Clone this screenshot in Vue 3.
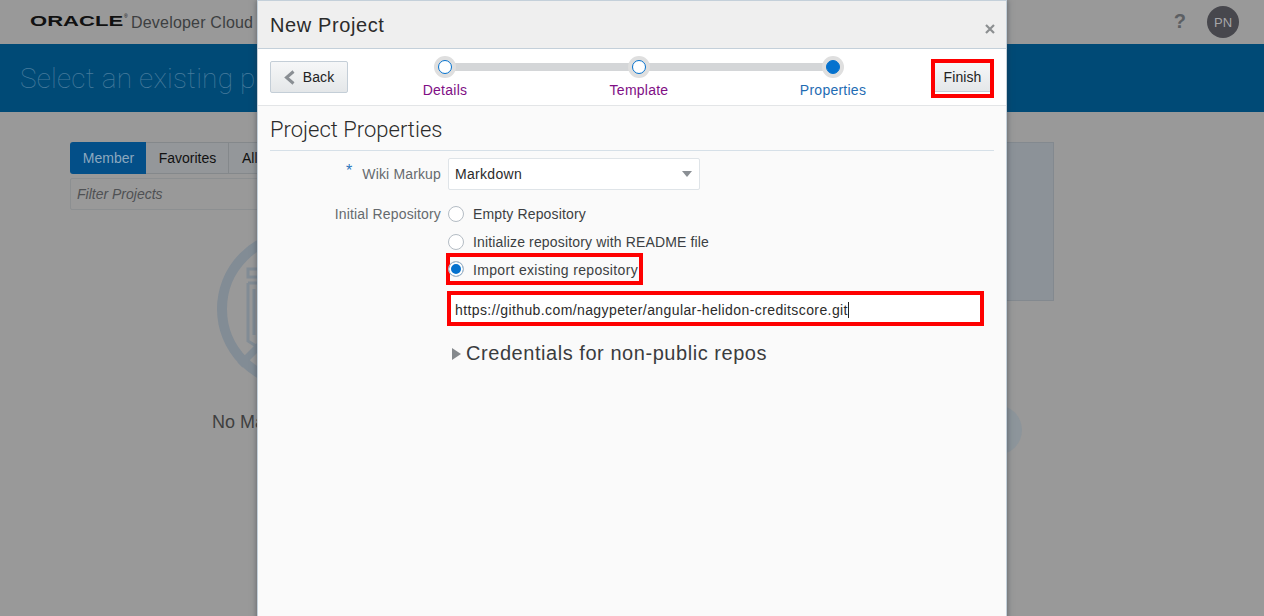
<script setup>
const steps = [
  { label: 'Details', done: true },
  { label: 'Template', done: true },
  { label: 'Properties', done: false }
]
const repoOptions = ['Empty Repository', 'Initialize repository with README file']
</script>

<template>
  <div class="page">
    <!-- dimmed page behind the dialog -->
    <header class="topbar">
      <div class="brand">
        <span class="oracle">ORACLE</span>
        <span class="reg">®</span>
        <span class="product">Developer Cloud</span>
      </div>
      <div class="top-right">
        <span class="help">?</span>
        <span class="avatar">PN</span>
      </div>
    </header>
    <div class="banner">Select an existing p</div>
    <main class="content">
      <div class="left-col">
        <div class="tabs">
          <span class="tab active">Member</span>
          <span class="tab fav">Favorites</span>
          <span class="tab all">All</span>
        </div>
        <div class="filter">Filter Projects</div>
        <svg class="empty-icon" width="158" height="158" viewBox="0 0 158 158">
          <circle cx="79" cy="79" r="74" fill="none" stroke="#828c95" stroke-width="10" />
          <rect x="31" y="39" width="14" height="8" fill="none" stroke="#828c95" stroke-width="3" />
          <path d="M31 53h20M31 53v58l8 5M37 59v46" fill="none" stroke="#828c95" stroke-width="3" />
          <path d="M23 135L135 23" stroke="#828c95" stroke-width="7" />
        </svg>
        <div class="empty-text">No Ma</div>
      </div>
      <div class="right-col">
        <div class="info-panel"></div>
        <div class="round"></div>
      </div>
    </main>

    <!-- dialog -->
    <section class="dialog">
      <div class="dialog-head">
        <h2>New Project</h2>
        <svg class="close" width="10" height="10" viewBox="0 0 10 10">
          <path d="M1 1l8 8M9 1l-8 8" stroke="#8c8f91" stroke-width="2.2" />
        </svg>
      </div>

      <div class="toolbar">
        <button class="btn back">
          <svg width="11" height="15" viewBox="0 0 11 15">
            <path d="M9.5 1.5L2.5 7.5l7 6" fill="none" stroke="#8a8f94" stroke-width="3" />
          </svg>
          Back
        </button>
        <div class="train">
          <div class="train-line"></div>
          <div v-for="s in steps" :key="s.label" class="step">
            <span class="node" :class="{ current: !s.done }"><i></i></span>
            <span class="step-label" :class="{ current: !s.done }">{{ s.label }}</span>
          </div>
        </div>
        <div class="mark finish-mark">
          <button class="btn finish">Finish</button>
        </div>
      </div>

      <div class="dialog-body">
        <h3>Project Properties</h3>
        <div class="form">
          <label class="lbl wiki"><span class="req">*</span>Wiki Markup</label>
          <div class="select">
            <span>Markdown</span>
            <i class="caret"></i>
          </div>

          <label class="lbl repo">Initial Repository</label>
          <div class="options">
            <div v-for="o in repoOptions" :key="o" class="radio-row">
              <span class="radio"></span>
              <span>{{ o }}</span>
            </div>
            <div class="mark radio-mark">
              <span class="radio on"></span>
              <span>Import existing repository</span>
            </div>
            <div class="mark url-mark">
              <span class="url">https://github.com/nagypeter/angular-helidon-creditscore.git</span><span class="cursor"></span>
            </div>
            <div class="credentials">
              <i class="tri"></i>
              <span>Credentials for non-public repos</span>
            </div>
          </div>
        </div>
      </div>
    </section>
  </div>
</template>

<style>
html, body {
  margin: 0;
  overflow: hidden;
}
</style>

<style scoped>
.page {
  position: relative;
  width: 1264px;
  height: 616px;
  overflow: hidden;
  background: #999999;
  font-family: "Liberation Sans", Arial, sans-serif;
  color: #2c2c2c;
}

.topbar {
  height: 44px;
  display: flex;
  justify-content: space-between;
  align-items: center;
  padding: 0 25px 0 30px;
  box-sizing: border-box;
}
.brand {
  display: flex;
  align-items: center;
  height: 44px;
}
.oracle {
  display: inline-block;
  width: 94px;
  font-size: 15px;
  font-weight: 700;
  color: #111;
  transform: scaleX(1.47);
  transform-origin: left center;
  line-height: 1;
  margin-top: -3px;
}
.reg {
  font-size: 5px;
  color: #111;
  margin: -12px 0 0 0;
  width: 7px;
}
.product {
  font-size: 16px;
  letter-spacing: 0.2px;
  color: #3d3f41;
  margin-top: 2px;
  white-space: nowrap;
}
.top-right {
  display: flex;
  align-items: center;
  gap: 21px;
}
.help {
  font-size: 20px;
  font-weight: 700;
  color: #5c5f63;
  margin-top: -2px;
}
.avatar {
  width: 32px;
  height: 32px;
  border-radius: 50%;
  background: #47474d;
  color: #a6a6a8;
  font-size: 13px;
  display: flex;
  align-items: center;
  justify-content: center;
}

.banner {
  height: 68px;
  background: #004a76;
  color: #467a9c;
  font-family: Roboto, "Liberation Sans", sans-serif;
  font-weight: 100;
  font-size: 28px;
  line-height: 70px;
  padding-left: 20px;
  letter-spacing: 0.2px;
}

.content {
  display: flex;
  padding: 30px 0 0 70px;
}
.left-col {
  width: 300px;
  display: flex;
  flex-direction: column;
}
.tabs {
  display: flex;
  height: 32px;
  font-size: 14px;
}
.tab {
  display: flex;
  align-items: center;
  justify-content: center;
  box-sizing: border-box;
  background: #94979a;
  border: 1px solid #84888b;
  border-left: 0;
  color: #111;
}
.tab.active {
  width: 76px;
  background: #034f88;
  border: 0;
  border-radius: 3px 0 0 3px;
  color: #8ca8bf;
  padding-left: 1px;
}
.tab.fav {
  width: 83px;
  padding-left: 1px;
}
.tab.all {
  width: 40px;
  padding-left: 13px;
  justify-content: flex-start;
}
.filter {
  margin-top: 4px;
  height: 32px;
  box-sizing: border-box;
  border: 1px solid #8c8f91;
  border-radius: 2px;
  padding-left: 6px;
  line-height: 30px;
  font-size: 14px;
  font-style: italic;
  color: #4f5154;
}
.empty-icon {
  margin: 20px 0 0 147px;
}
.empty-text {
  margin: 24px 0 0 142px;
  font-size: 18px;
  color: #3f3f3f;
}
.right-col {
  margin-left: 580px;
  width: 104px;
  display: flex;
  flex-direction: column;
  align-items: flex-end;
}
.info-panel {
  width: 104px;
  height: 159px;
  box-sizing: border-box;
  background: #8c9298;
  border: 1px solid #83898f;
}
.round {
  margin: 104px 32px 0 0;
  width: 50px;
  height: 50px;
  border-radius: 50%;
  background: #8d959b;
  flex: none;
}

.dialog {
  position: absolute;
  left: 257px;
  top: 0;
  width: 750px;
  height: 640px;
  box-sizing: border-box;
  background: #fafafa;
  border: 1px solid #c4d0da;
  border-bottom: 0;
  box-shadow: 0 0 6px rgba(40, 50, 60, 0.55);
}
.dialog-head {
  height: 47px;
  background: #efefef;
  border-bottom: 1px solid #c4d0da;
  display: flex;
  align-items: center;
  justify-content: space-between;
  padding: 0 11px 0 12px;
}
.dialog-head h2 {
  margin: 0;
  padding-top: 1px;
  font-size: 20px;
  font-weight: 400;
  letter-spacing: 0.6px;
  color: #2b2b2b;
}
.close {
  margin-top: 8px;
}

.toolbar {
  height: 56px;
  background: #fff;
  border-bottom: 1px solid #e3e5e7;
  display: flex;
  align-items: flex-start;
  padding: 0 12px;
  box-sizing: content-box;
}
.btn {
  font-family: inherit;
  font-size: 14px;
  letter-spacing: 0.1px;
  color: #222;
  background: linear-gradient(#f6f7f8, #e4e7e9);
  border: 1px solid #c4ced7;
  border-radius: 2px;
  padding: 0;
  box-sizing: border-box;
}
.back {
  width: 78px;
  height: 32px;
  margin-top: 12px;
  display: flex;
  align-items: center;
  justify-content: center;
  gap: 8px;
}
.train {
  position: relative;
  width: 582px;
  display: grid;
  grid-template-columns: repeat(3, 194px);
  padding-top: 7px;
}
.train-line {
  position: absolute;
  left: 97px;
  right: 97px;
  top: 14px;
  height: 8px;
  background: #d4d6d8;
}
.step {
  position: relative;
  display: flex;
  flex-direction: column;
  align-items: center;
}
.node {
  width: 22px;
  height: 22px;
  border-radius: 50%;
  background: #dfdfdf;
  display: flex;
  align-items: center;
  justify-content: center;
}
.node i {
  width: 12px;
  height: 12px;
  box-sizing: content-box;
  border: 1.5px solid #0572ce;
  border-radius: 50%;
  background: #fff;
}
.node.current i {
  background: #0572ce;
}
.step-label {
  margin-top: 4px;
  font-size: 14px;
  line-height: 16px;
  letter-spacing: 0.25px;
  color: #800e85;
}
.step-label.current {
  color: #1f6cb3;
}

.mark {
  border: 4px solid #fe0000;
  box-sizing: border-box;
}
.finish-mark {
  width: 63px;
  height: 39px;
  margin: 10px 0 0 1px;
  background: #fff;
  overflow: hidden;
}
.finish {
  display: block;
  width: 55px;
  height: 29px;
  border-width: 0 0 1px;
  border-radius: 0;
}

.dialog-body {
  padding: 10px 12px 0;
}
.dialog-body h3 {
  margin: 0;
  height: 35px;
  box-sizing: border-box;
  border-bottom: 1px solid #d6e0e8;
  font-family: Roboto, "Liberation Sans", sans-serif;
  font-size: 22px;
  font-weight: 300;
  line-height: 28px;
  color: #2b2b2b;
}
.form {
  display: grid;
  grid-template-columns: 171px 1fr;
  column-gap: 7px;
  margin-top: 7px;
  font-size: 14px;
  letter-spacing: 0.15px;
}
.lbl {
  text-align: right;
  color: #666a6e;
  letter-spacing: 0.15px;
  white-space: nowrap;
}
.wiki {
  padding-top: 7px;
}
.req {
  color: #2a76bd;
  font-size: 16px;
  margin-right: 10px;
  position: relative;
  top: -3px;
}
.repo {
  padding-top: 16px;
}
.select {
  width: 252px;
  height: 32px;
  box-sizing: border-box;
  border: 1px solid #dfe4e8;
  border-radius: 2px;
  background: #fff;
  display: flex;
  align-items: center;
  justify-content: space-between;
  padding: 0 7px 0 6px;
  color: #2b2b2b;
  letter-spacing: 0.3px;
}
.caret {
  width: 0;
  height: 0;
  border-left: 5px solid transparent;
  border-right: 5px solid transparent;
  border-top: 6px solid #8a8f94;
}
.options {
  padding-top: 10px;
  color: #3c3f42;
}
.radio-row {
  height: 28px;
  display: flex;
  align-items: center;
  gap: 9px;
}
.radio {
  width: 16px;
  height: 16px;
  flex: none;
  box-sizing: border-box;
  border: 1px solid #b4bcc4;
  border-radius: 50%;
  background: #fff;
  margin-top: -1px;
}
.radio.on {
  background: #0572ce;
  box-shadow: inset 0 0 0 2px #fff;
  margin: -3px 0 0 -4px;
}
.radio-mark {
  width: 197px;
  height: 32px;
  margin: -3px 0 0 -2px;
  padding: 2px 0 0 2px;
  display: flex;
  align-items: center;
  gap: 9px;
  letter-spacing: 0.33px;
  white-space: nowrap;
}
.url-mark {
  width: 537px;
  height: 35px;
  margin: 6px 0 0 -1px;
  padding: 3px 0 0 4px;
  background: #fff;
  display: flex;
  align-items: center;
  color: #2b2b2b;
  letter-spacing: 0.4px;
  white-space: nowrap;
}
.cursor {
  width: 1px;
  height: 16px;
  background: #222;
}
.credentials {
  margin-top: 16px;
  display: flex;
  align-items: center;
  gap: 5px;
  font-size: 20px;
  letter-spacing: 0.55px;
  color: #3a3c3e;
}
.tri {
  width: 0;
  height: 0;
  border-top: 6px solid transparent;
  border-bottom: 6px solid transparent;
  border-left: 9px solid #85898d;
  margin-left: 4px;
}
</style>
